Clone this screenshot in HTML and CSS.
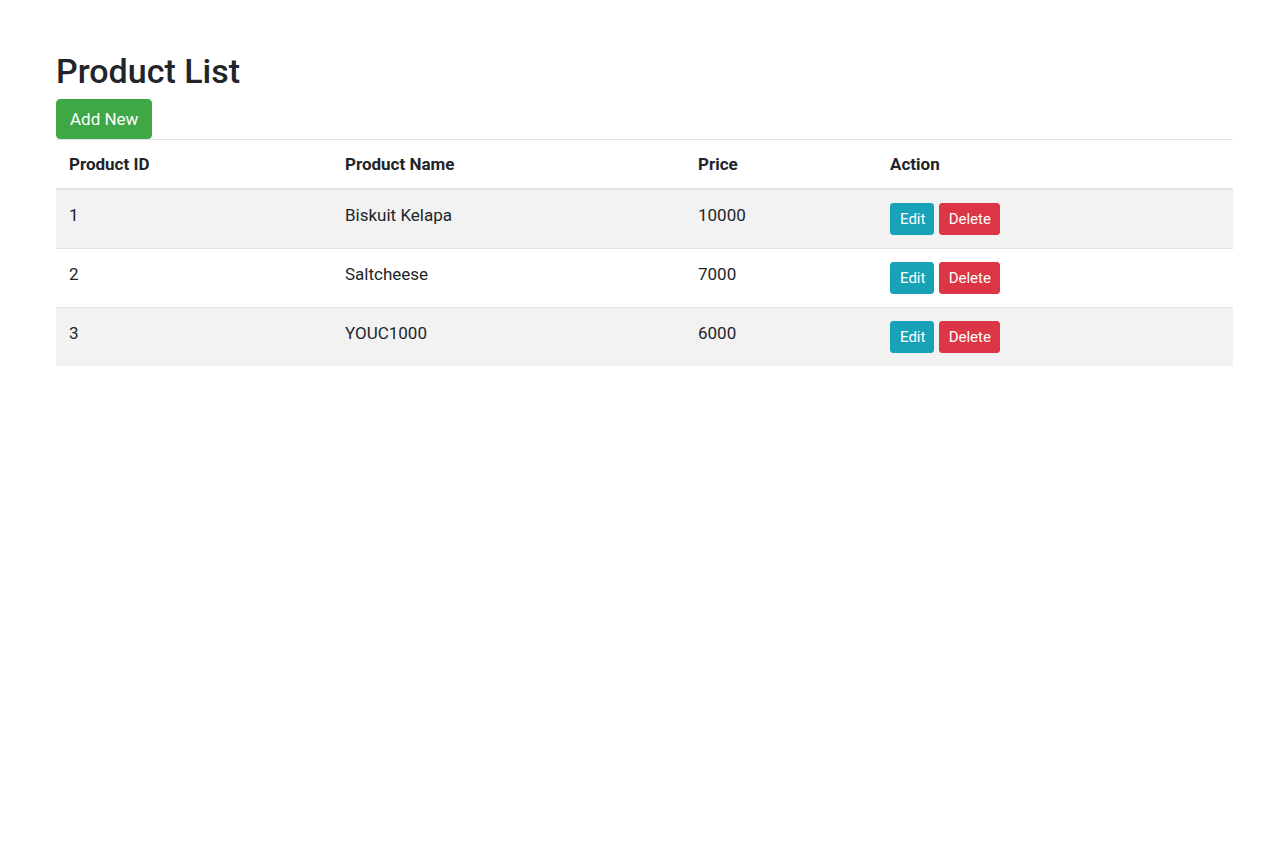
FILE: index.html
```html
<!DOCTYPE html>
<html lang="en">
<head>
<meta charset="utf-8">
<title>Product List</title>
<link rel="stylesheet" href="styles.css">
</head>
<body>
<div class="container">
  <h2 class="title">Product List</h2>
  <button class="btn btn-success">Add New</button>
  <table class="table">
    <thead>
      <tr>
        <th class="c-id">Product ID</th>
        <th class="c-name">Product Name</th>
        <th class="c-price">Price</th>
        <th class="c-action">Action</th>
      </tr>
    </thead>
    <tbody>
      <tr>
        <td>1</td>
        <td>Biskuit Kelapa</td>
        <td>10000</td>
        <td class="actions"><button class="btn btn-sm btn-info">Edit</button> <button class="btn btn-sm btn-danger">Delete</button></td>
      </tr>
      <tr>
        <td>2</td>
        <td>Saltcheese</td>
        <td>7000</td>
        <td class="actions"><button class="btn btn-sm btn-info">Edit</button> <button class="btn btn-sm btn-danger">Delete</button></td>
      </tr>
      <tr>
        <td>3</td>
        <td>YOUC1000</td>
        <td>6000</td>
        <td class="actions"><button class="btn btn-sm btn-info">Edit</button> <button class="btn btn-sm btn-danger">Delete</button></td>
      </tr>
    </tbody>
  </table>
</div>
</body>
</html>
```
FILE: styles.css
```css
html, body {
  margin: 0;
  padding: 0;
  background: #fff;
}
body {
  font-family: Roboto, "Liberation Sans", Arial, sans-serif;
  font-size: 17px;
  line-height: 24px;
  color: #212529;
}
.container {
  width: 1177px;
  padding: 52px 0 0 56px;
}
.title {
  font-size: 34px;
  font-weight: 500;
  line-height: 39px;
  margin: 0 0 8px 0;
}
.btn {
  display: inline-block;
  font-family: inherit;
  font-size: 17px;
  line-height: 25px;
  font-weight: 400;
  padding: 6px 13px;
  border: 1px solid transparent;
  border-radius: 4px;
  color: #fff;
  vertical-align: middle;
  cursor: pointer;
}
.btn-success {
  line-height: 26px;
}
.btn-sm {
  font-size: 15px;
  line-height: 22px;
  padding: 4px 8px 4px 9px;
  border-radius: 3px;
  vertical-align: top;
}
.btn-success { background: #3ea846; border-color: #3ea846; }
.btn-info { background: #17a2b8; border-color: #17a2b8; }
.btn-danger { background: #dc3545; border-color: #dc3545; }
.table {
  width: 100%;
  border-collapse: collapse;
  margin-bottom: 16px;
}
.table th, .table td {
  padding: 12px 12px 12px 13px;
  text-align: left;
  vertical-align: top;
  border-top: 1px solid #dee2e6;
}
.table td {
  line-height: 24px;
  padding-top: 13px;
  padding-bottom: 11px;
}
.table td.actions {
  padding-top: 13px;
  padding-bottom: 13px;
  line-height: 32px;
}
.table thead th {
  vertical-align: bottom;
  border-bottom: 2px solid #dee2e6;
  font-weight: 700;
}
.table tbody tr:nth-child(odd) {
  background: rgba(0, 0, 0, 0.05);
}
.c-id { width: 251px; }
.c-name { width: 328px; }
.c-price { width: 167px; }
```
